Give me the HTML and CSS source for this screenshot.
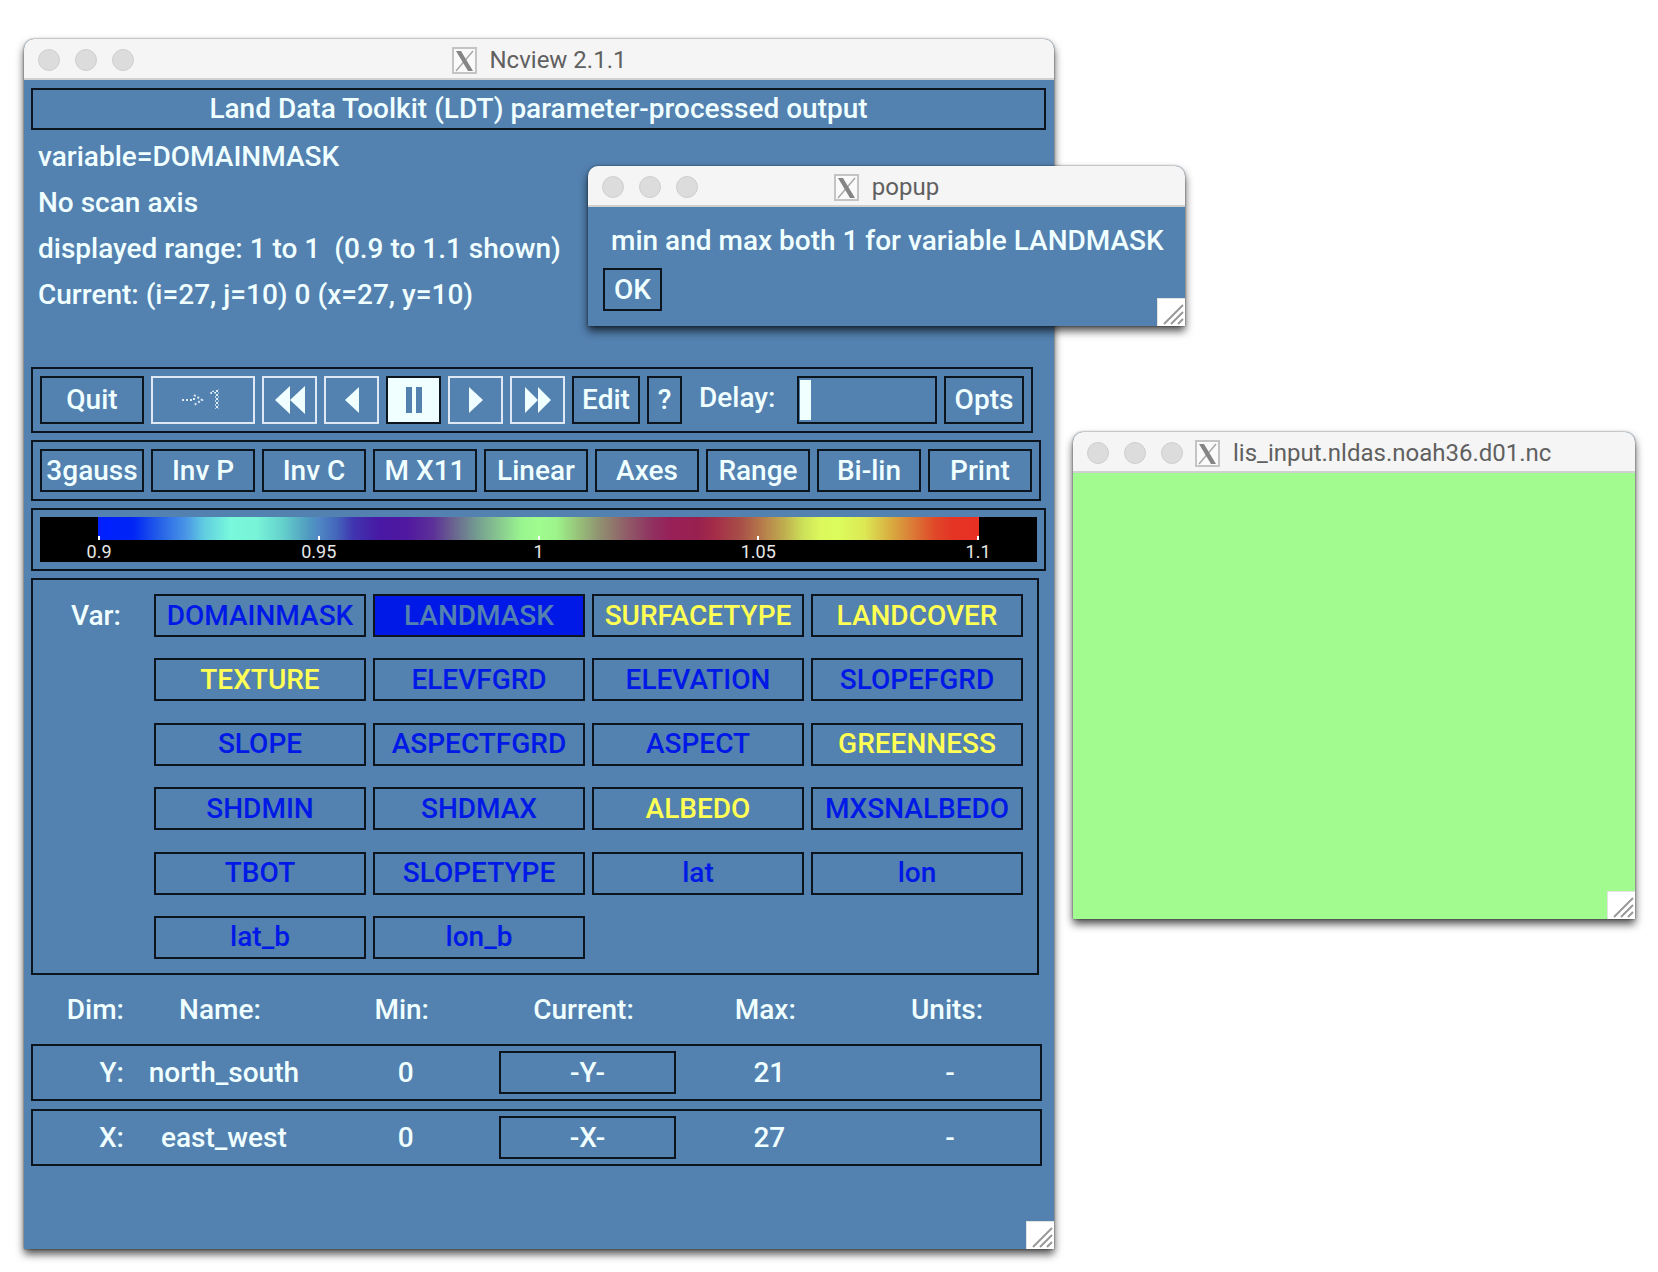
FILE: index.html
```html
<!DOCTYPE html>
<html lang="en">
<head>
<meta charset="utf-8">
<title>Ncview 2.1.1</title>
<link rel="stylesheet" href="styles.css">
</head>
<body>
<svg class="defs" aria-hidden="true">
  <symbol id="x-logo" viewBox="0 0 25 27">
    <rect x="1" y="1" width="23" height="25" fill="#fafafa" stroke="#c4c4c4" stroke-width="2"/>
    <path d="M21 4 4 24" stroke="#a8a8a8" stroke-width="1.5"/>
    <path d="M4 4h5l12 20h-5z" fill="#858585"/>
  </symbol>
  <symbol id="grip" viewBox="0 0 28 28">
    <rect width="28" height="28" fill="#fff"/>
    <path d="M0 28V0h28" fill="none" stroke="#e2e2e2" stroke-width="2"/>
    <path d="M7 26 26 7M14 26 26 14M21 26l5-5" stroke="#999" stroke-width="2"/>
  </symbol>
</svg>
<main class="desktop">
  <section class="window viewer">
    <header class="titlebar">
      <div class="lights"><i></i><i></i><i></i></div>
      <h1 class="title"><svg class="logo"><use href="#x-logo"/></svg>Ncview 2.1.1</h1>
    </header>
    <div class="viewer-body">
      <p class="banner">Land Data Toolkit (LDT) parameter-processed output</p>
      <div class="info">
        <p>variable=DOMAINMASK</p>
        <p>No scan axis</p>
        <p>displayed range: 1 to 1&nbsp; (0.9 to 1.1 shown)</p>
        <p>Current: (i=27, j=10) 0 (x=27, y=10)</p>
      </div>
      <div class="panel bar transport">
        <button class="btn wide">Quit</button>
        <button class="btn wide light" aria-label="Restart" disabled><svg width="22" height="14" viewBox="0 0 22 14"><path d="M0 7h11M12 2l8 5-8 5M12 5v4" fill="none" stroke="#dcecf4" stroke-width="2" stroke-dasharray="2 2"/></svg><span class="stipple">1</span></button>
        <button class="btn light" aria-label="Rewind"><svg width="30" height="28" viewBox="0 0 30 28"><path d="M0 14 15 0V28zM15 14 30 0V28z"/></svg></button>
        <button class="btn light" aria-label="Back"><svg width="14" height="26" viewBox="0 0 14 26"><path d="M0 13 14 0V26z"/></svg></button>
        <button class="btn pause" aria-label="Pause"><svg width="16" height="26" viewBox="0 0 16 26"><path d="M0 0h6v26H0zM10 0h6v26h-6z"/></svg></button>
        <button class="btn light" aria-label="Forward"><svg width="14" height="26" viewBox="0 0 14 26"><path d="M14 13 0 0V26z"/></svg></button>
        <button class="btn light" aria-label="Fast forward"><svg width="26" height="26" viewBox="0 0 26 26"><path d="M13 13 0 0V26zM26 13 13 0V26z"/></svg></button>
        <button class="btn edit">Edit</button>
        <button class="btn help">?</button>
        <label class="delay-label" for="delay">Delay:</label>
        <input class="delay" id="delay" type="range" min="0" max="100" value="0">
        <button class="btn opts">Opts</button>
      </div>
      <div class="panel bar">
        <button class="btn wide">3gauss</button>
        <button class="btn wide">Inv P</button>
        <button class="btn wide">Inv C</button>
        <button class="btn wide">M X11</button>
        <button class="btn wide">Linear</button>
        <button class="btn wide">Axes</button>
        <button class="btn wide">Range</button>
        <button class="btn wide">Bi-lin</button>
        <button class="btn wide">Print</button>
      </div>
      <div class="panel scale">
        <div class="scale-field">
          <div class="ramp"></div>
          <div class="ticks"><span>0.9</span><span>0.95</span><span>1</span><span>1.05</span><span>1.1</span></div>
        </div>
      </div>
      <div class="panel vars">
        <span class="var-label">Var:</span>
        <div class="var-grid">
          <button class="btn var">DOMAINMASK</button>
          <button class="btn var selected">LANDMASK</button>
          <button class="btn var timed">SURFACETYPE</button>
          <button class="btn var timed">LANDCOVER</button>
          <button class="btn var timed">TEXTURE</button>
          <button class="btn var">ELEVFGRD</button>
          <button class="btn var">ELEVATION</button>
          <button class="btn var">SLOPEFGRD</button>
          <button class="btn var">SLOPE</button>
          <button class="btn var">ASPECTFGRD</button>
          <button class="btn var">ASPECT</button>
          <button class="btn var timed">GREENNESS</button>
          <button class="btn var">SHDMIN</button>
          <button class="btn var">SHDMAX</button>
          <button class="btn var timed">ALBEDO</button>
          <button class="btn var">MXSNALBEDO</button>
          <button class="btn var">TBOT</button>
          <button class="btn var">SLOPETYPE</button>
          <button class="btn var">lat</button>
          <button class="btn var">lon</button>
          <button class="btn var">lat_b</button>
          <button class="btn var">lon_b</button>
        </div>
      </div>
      <table class="dims">
        <thead>
          <tr><th>Dim:</th><th>Name:</th><th>Min:</th><th>Current:</th><th>Max:</th><th>Units:</th></tr>
        </thead>
        <tbody>
          <tr><td>Y:</td><td>north_south</td><td>0</td><td><button class="btn axis">-Y-</button></td><td>21</td><td>-</td></tr>
          <tr><td>X:</td><td>east_west</td><td>0</td><td><button class="btn axis">-X-</button></td><td>27</td><td>-</td></tr>
        </tbody>
      </table>
    </div>
    <svg class="grip"><use href="#grip"/></svg>
  </section>

  <section class="window map">
    <header class="titlebar">
      <div class="lights"><i></i><i></i><i></i></div>
      <h2 class="title"><svg class="logo"><use href="#x-logo"/></svg>lis_input.nldas.noah36.d01.nc</h2>
    </header>
    <div class="field"></div>
    <svg class="grip"><use href="#grip"/></svg>
  </section>

  <section class="window popup" role="dialog" aria-label="popup">
    <header class="titlebar">
      <div class="lights"><i></i><i></i><i></i></div>
      <h2 class="title"><svg class="logo"><use href="#x-logo"/></svg>popup</h2>
    </header>
    <div class="popup-body">
      <p>min and max both 1 for variable LANDMASK</p>
      <button class="btn ok">OK</button>
    </div>
    <svg class="grip"><use href="#grip"/></svg>
  </section>
</main>
</body>
</html>
```
FILE: styles.css
```css
:root {
  --steel: #5381b0;
  --azure: #f0ffff;
  --line: #0c151d;
  --blue: #0019e6;
}
* { box-sizing: border-box; }
body {
  margin: 0;
  background: #fff;
  color: var(--azure);
  font: 500 28px/32px Roboto, "Liberation Sans", sans-serif;
}
p, h1, h2 { margin: 0; }
.defs { position: absolute; width: 0; height: 0; }
.desktop { position: relative; min-height: 100vh; }

/* Windows */
.window {
  position: absolute;
  background: var(--steel);
  border-radius: 10px 10px 0 0;
  box-shadow: 0 0 2px rgba(0, 0, 0, .6), 0 5px 9px rgba(0, 0, 0, .7);
}
.viewer { left: 24px; top: 39px; width: 1030px; padding-bottom: 75px; }
.popup { left: 588px; top: 166px; width: 597px; }
.map { left: 1073px; top: 432px; width: 562px; }
.titlebar {
  display: grid;
  grid-template-columns: 1fr auto 1fr;
  align-items: center;
  height: 41px;
  padding-top: 3px;
  background: #f5f5f5;
  border-bottom: 2px solid #d0d0d0;
  border-radius: 10px 10px 0 0;
}
.lights { display: flex; gap: 15px; padding: 0 12px 0 14px; }
.lights i {
  width: 22px;
  height: 22px;
  border: 1px solid #cfcfcf;
  border-radius: 50%;
  background: #dcdcdc;
}
.title {
  display: flex;
  align-items: center;
  gap: 13px;
  color: #606060;
  font-size: 24px;
  font-weight: 400;
}
.logo { width: 25px; height: 27px; }
.grip { position: absolute; right: 0; bottom: 0; width: 28px; height: 28px; }

/* Shared controls */
.btn {
  display: flex;
  align-items: center;
  justify-content: center;
  height: 43px;
  padding: 0;
  border: 2px solid var(--line);
  border-radius: 0;
  background: none;
  color: inherit;
  font: inherit;
  white-space: nowrap;
}
.btn svg { fill: var(--azure); }
.panel { border: 2px solid var(--line); }

/* Viewer */
.viewer-body {
  display: flex;
  flex-direction: column;
  align-items: flex-start;
  gap: 7px;
  padding: 8px 7px 0;
}
.banner {
  width: 1015px;
  border: 2px solid var(--line);
  padding: 3px 0;
  text-align: center;
}
.info { margin-top: -3px; padding: 0 7px 42px; line-height: 46px; }
.bar { display: flex; gap: 7px; padding: 7px; }
.wide { width: 104px; }
.transport .btn { height: 48px; width: 55px; }
.transport .wide { width: 104px; gap: 4px; }
.transport .edit { width: 68px; }
.transport .help { width: 35px; }
.transport .opts { width: 80px; }
.transport .light { border-color: #dfe8f5; }
.transport .pause { background: var(--azure); }
.transport .pause svg { fill: var(--steel); }
.stipple {
  background: repeating-conic-gradient(#dcecf4 0 25%, transparent 0 50%) 0 0 / 4px 4px;
  background-clip: text;
  color: transparent;
}
.delay-label { width: 101px; padding-left: 10px; line-height: 44px; }
.delay {
  appearance: none;
  width: 140px;
  height: 48px;
  margin: 0;
  padding: 2px 1px;
  border: 2px solid var(--line);
  background: none;
}
.delay::-webkit-slider-thumb {
  appearance: none;
  width: 11px;
  height: 40px;
  background: var(--azure);
}
.scale { padding: 7px; }
.scale-field { width: 997px; height: 45px; padding: 0 58px; background: #000; }
.ramp {
  height: 23px;
  background: linear-gradient(to right,
    #0020ff 0%, #0025f5 4%, #2560e8 7%, #4a96e6 10%, #60cce0 12%, #78f8dc 15%,
    #78f4d8 18%, #64d0cc 21%, #4f98c0 24%, #5088c4 25%, #4468bc 27%, #4034b0 29%,
    #4818a4 32%, #5018a0 35%, #5c3098 38%, #685c90 40%, #749c90 43%, #8cd090 46%,
    #98f48e 48%, #a0fc8e 50%, #9cf48a 52%, #98cc7c 54%, #909070 57%, #905c68 60%,
    #903060 63%, #982058 65%, #982050 68%, #a42c48 70%, #a85048 73%, #b4744a 75%,
    #c0b050 78%, #cce058 80%, #dcf85c 82%, #dcfc5c 84%, #dce854 87%, #d8ac40 90%,
    #dc7034 93%, #e04828 95%, #e43424 97%, #e83024 100%);
}
.ticks { display: flex; justify-content: space-between; font: 400 18px/24px Roboto, sans-serif; color: #e8e8e8; }
.ticks span { position: relative; display: flex; justify-content: center; width: 2px; }
.ticks span::before { content: ""; position: absolute; top: -4px; width: 2px; height: 4px; background: #fff; }

.vars { display: flex; padding: 14px; }
.var-label { width: 107px; padding-left: 24px; line-height: 43px; }
.var-grid {
  display: grid;
  grid-template-columns: repeat(4, 212px);
  column-gap: 7px;
  align-content: space-between;
  height: 365px;
}
.var { color: var(--blue); }
.var.timed { color: #ffff54; }
.var.selected { background: var(--blue); color: var(--steel); }

.dims {
  width: 1011px;
  margin-top: -7px;
  table-layout: fixed;
  border-spacing: 0 8px;
  text-align: center;
}
.dims th { height: 53px; padding: 0 8px 0 0; font-weight: 500; }
.dims th:first-child, .dims td:first-child { width: 102px; text-align: right; padding-right: 9px; }
.dims td { height: 57px; padding: 0; border: solid var(--line); border-width: 2px 0; }
.dims td:first-child { border-left-width: 2px; }
.dims td:last-child { border-right-width: 2px; }
.axis { width: 177px; margin: 0 auto; }

/* Popup and map */
.popup-body { padding: 18px 15px 15px; }
.popup-body p { padding: 0 8px 11px; white-space: nowrap; }
.ok { width: 59px; }
.field { height: 446px; background: #a1fb8e; }
```
